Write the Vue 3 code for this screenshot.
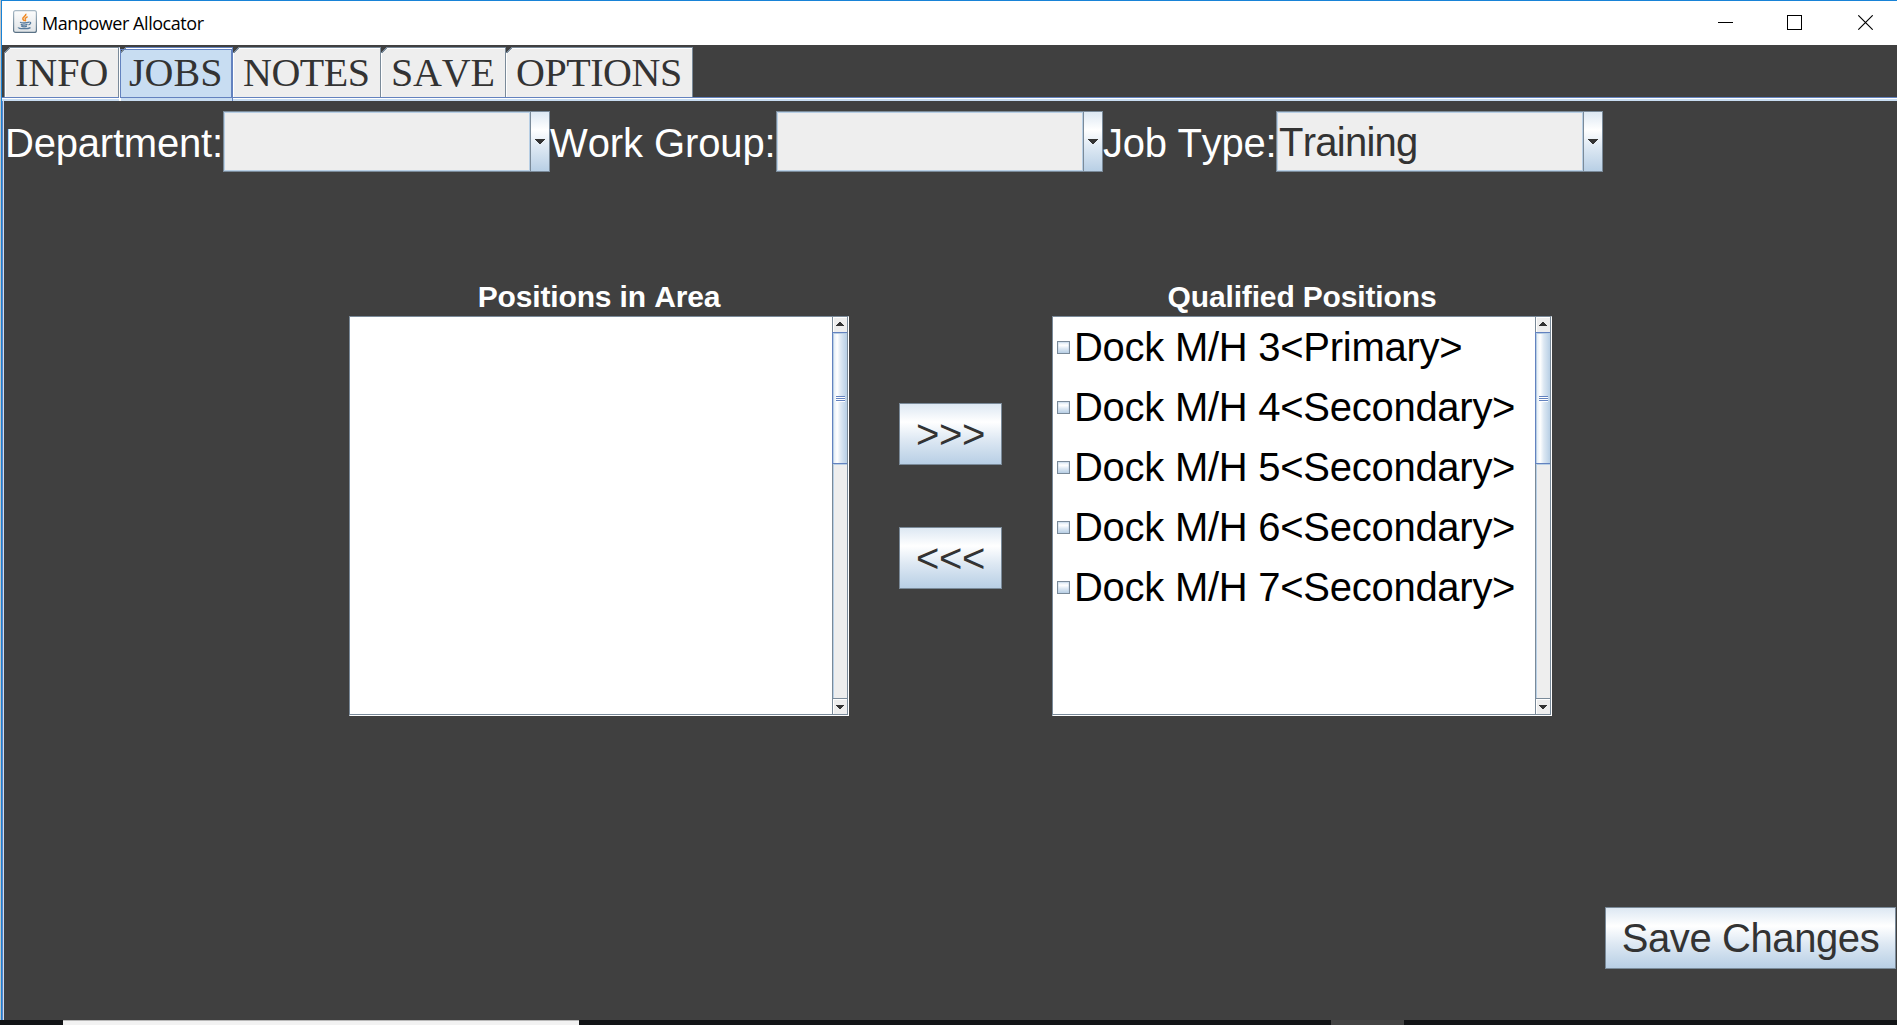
<script setup>
import { ref } from 'vue'

const tabs = [
  { name: 'INFO', w: 115 },
  { name: 'JOBS', w: 114 },
  { name: 'NOTES', w: 148 },
  { name: 'SAVE', w: 125 },
  { name: 'OPTIONS', w: 187 },
]
const active = ref('JOBS')

const filters = [
  { label: 'Department:', value: '', cls: 'department' },
  { label: 'Work Group:', value: '', cls: 'group' },
  { label: 'Job Type:', value: 'Training', cls: 'type' },
]

const lists = [
  { title: 'Positions in Area', cls: 'area', items: [] },
  {
    title: 'Qualified Positions',
    cls: 'qualified',
    items: [
      'Dock M/H 3<Primary>',
      'Dock M/H 4<Secondary>',
      'Dock M/H 5<Secondary>',
      'Dock M/H 6<Secondary>',
      'Dock M/H 7<Secondary>',
    ],
  },
]
</script>

<template>
  <div class="screen">
    <div class="window">
      <header class="titlebar">
        <svg class="java" width="24" height="23" viewBox="0 0 24 23">
          <defs>
            <linearGradient id="plate" x1="0" y1="0" x2="0" y2="1">
              <stop offset="0" stop-color="#fdfdfd" />
              <stop offset="1" stop-color="#dfe3e6" />
            </linearGradient>
            <linearGradient id="rim" x1="0" y1="0" x2="0" y2="1">
              <stop offset="0" stop-color="#a9bac6" />
              <stop offset="1" stop-color="#5a7286" />
            </linearGradient>
          </defs>
          <rect x=".6" y=".6" width="22.8" height="21.8" rx="2" fill="url(#plate)" stroke="url(#rim)" stroke-width="1.2" />
          <path d="M12.8 3.8c1 2.2-3.8 3.4-3 5.3.3.9 1.4 1.5 1.8 2.1M14.6 6.6c-1.6.8-2.8 1.6-2.3 2.7.4.8.5 1.1-.2 1.9" fill="none" stroke="#f08a24" stroke-width="1.5" />
          <path d="M7 12.3c1.6 1 6.6.9 9-.1M16.3 12.2c2.2-.3 1.7 2-.8 2.7M7.8 14.3c1.6.8 5 .8 6.700.1M8.300 16.100c1.500.8 4 .8 5.600.1M5.500 17.300c-1 1.600 9.300 2 12 .3" fill="none" stroke="#557a9c" stroke-width="1.300" />
        </svg>
        <span class="caption">Manpower Allocator</span>
        <svg class="controls" width="155" height="15" viewBox="0 0 155 15" fill="none" stroke="#000">
          <path d="M0 7.500h15" />
          <rect x="69.500" y=".5" width="14" height="14" />
          <path d="M140.300 .3l14.400 14.400M154.700 .3l-14.400 14.400" stroke-width="1.100" />
        </svg>
      </header>

      <nav class="tabs">
        <button
          v-for="t in tabs"
          :key="t.name"
          class="tab"
          :class="[{ active: t.name === active }, t.name.toLowerCase()]"
          :style="{ width: t.w + 'px' }"
          @click="active = t.name"
        >{{ t.name }}</button>
      </nav>

      <main class="pane">
        <section class="filters">
          <template v-for="f in filters" :key="f.label">
            <label class="flabel" :class="f.cls">{{ f.label }}</label>
            <div class="combo">
              <div class="field"><span>{{ f.value }}</span></div>
              <div class="drop">
                <svg width="10" height="5" viewBox="0 0 10 5" shape-rendering="crispEdges"><path d="M0 0h10v1H9v1H8v1H7v1H6v1H4V4H3V3H2V2H1V1H0z" fill="#333" /></svg>
              </div>
            </div>
          </template>
        </section>

        <section class="lists">
          <div v-for="l in lists" :key="l.title" class="column" :class="l.cls">
            <h2><span>{{ l.title }}</span></h2>
            <div class="scroll">
              <ul>
                <li v-for="i in l.items" :key="i">
                  <i class="check"></i><span>{{ i }}</span>
                </li>
              </ul>
              <div class="bar">
                <div class="step">
                  <svg width="8" height="4" viewBox="0 0 8 4" shape-rendering="crispEdges"><path d="M3 0h2v1h1v1h1v1h1v1H0V3h1V2h1V1h1z" fill="#333" /></svg>
                </div>
                <div class="thumb"><i></i><i></i><i></i></div>
                <div class="track"></div>
                <div class="step down">
                  <svg width="8" height="4" viewBox="0 0 8 4" shape-rendering="crispEdges"><path d="M0 0h8v1H7v1H6v1H5v1H3V3H2V2H1V1H0z" fill="#333" /></svg>
                </div>
              </div>
            </div>
          </div>
          <div class="movers">
            <button class="metal">&gt;&gt;&gt;</button>
            <button class="metal">&lt;&lt;&lt;</button>
          </div>
        </section>

        <footer class="actions">
          <button class="metal save">Save Changes</button>
        </footer>
      </main>
    </div>
    <div class="taskbar">
      <div class="search"></div>
      <div class="task"></div>
    </div>
  </div>
</template>

<style>
body {
  margin: 0;
  overflow: hidden;
}
</style>

<style scoped>
.screen {
  width: 1897px;
  height: 1025px;
  display: flex;
  flex-direction: column;
  background: #404040;
  font-family: "Liberation Sans", Arial, sans-serif;
  font-size: 40px;
  font-kerning: none;
  color: #333;
  overflow: hidden;
}
.screen * {
  box-sizing: border-box;
}
button {
  font: inherit;
  font-kerning: none;
  color: inherit;
  padding: 0;
  margin: 0;
  border-radius: 0;
  white-space: nowrap;
}
.window {
  height: 1020px;
  border-top: 1px solid #1883d7;
  border-left: 1px solid #1883d7;
  margin-left: 1px;
  box-shadow: -1px 0 #c4c4c4;
}
.titlebar {
  height: 44px;
  background: #fff;
  display: flex;
  align-items: flex-start;
  padding: 9px 24px 0 11px;
}
.caption {
  margin: 1px 0 0 5px;
  font: 18px/24px "Open Sans", "Noto Sans", sans-serif;
  letter-spacing: -0.45px;
  color: #000;
  white-space: nowrap;
}
.controls {
  margin: 5px 0 0 auto;
}
.tabs {
  height: 56px;
  padding: 2px 0 0 2px;
  display: flex;
  background:
    linear-gradient(#6382bf, #6382bf) 0 52px / 100% 1px no-repeat,
    linear-gradient(#fff, #fff) 0 53px / 100% 1px no-repeat,
    linear-gradient(#c8ddf2, #c8ddf2) 0 54px / 100% 2px no-repeat,
    #404040;
}
.tab {
  position: relative;
  height: 50px;
  border: 0;
  border-top: 1px solid #7a8a99;
  border-right: 1px solid #7a8a99;
  background: #eee;
  box-shadow: inset 1px 1px #fff;
  font-family: "Liberation Serif", "Times New Roman", serif;
  line-height: 46px;
  text-align: left;
  padding-left: 10px;
}
.tab.info {
  border-left: 1px solid #7a8a99;
}
.tab.notes,
.tab.options {
  letter-spacing: -0.45px;
}
.tab.save {
  width: 125px;
  letter-spacing: -0.2px;
}
.tab::before {
  content: "";
  position: absolute;
  left: 0;
  top: -1px;
  width: 6px;
  height: 6px;
  background: linear-gradient(135deg, #404040 0 48%, #7a8a99 48% 60%, transparent 60%);
}
.tab.info::before {
  left: -1px;
}
.tab.active {
  height: 54px;
  background: #c8ddf2;
  border-top: 1px solid #6382bf;
  border-right: 1px solid #6382bf;
  border-left: 1px solid #fff;
  padding: 0 0 4px 9px;
}
.tab.active::after {
  content: "";
  position: absolute;
  left: 0;
  top: 1px;
  right: 0;
  height: 47px;
  border: 1px solid #6382bf;
}
.pane {
  height: 919px;
  border-left: 1px solid #6382bf;
  box-shadow: inset 1px 0 #c8ddf2;
  background: #404040;
  display: flex;
  flex-direction: column;
}
.filters {
  height: 71px;
  padding: 10px 0 0 2px;
  display: flex;
  color: #fff;
}
.flabel {
  line-height: 65px;
  white-space: nowrap;
  flex: none;
}
.department {
  width: 218px;
  letter-spacing: -0.2px;
}
.group {
  width: 226px;
  letter-spacing: -0.1px;
}
.type {
  width: 173px;
  letter-spacing: -0.25px;
}
.combo {
  width: 327px;
  height: 61px;
  flex: none;
  display: flex;
  border: 1px solid #7a8a99;
  background: #eee;
  color: #333;
}
.field {
  flex: 1;
  border: 1px solid #b8cfe5;
  line-height: 59px;
  padding-left: 1px;
  letter-spacing: -0.75px;
}
.drop {
  width: 19px;
  border-left: 1px solid #7a8a99;
  background: linear-gradient(#dde8f3, #fff 30%, #dde8f3 60%, #b8cfe5);
  display: flex;
  justify-content: center;
  padding-top: 27px;
}
.drop svg {
  flex: none;
}
.lists {
  margin-top: 108px;
  height: 436px;
  display: flex;
}
.column {
  width: 500px;
  flex: none;
}
.area {
  margin-left: 346px;
  order: 1;
}
.movers {
  order: 2;
  width: 103px;
  margin: 123px 50px 0;
  display: flex;
  flex-direction: column;
  gap: 62px;
}
.qualified {
  order: 3;
}
h2 {
  height: 36px;
  margin: 0;
  font-size: 30px;
  line-height: 34px;
  letter-spacing: -0.15px;
  text-align: center;
  color: #fff;
}
.scroll {
  height: 400px;
  display: flex;
  background: #fff;
  border: 1px solid #7a8a99;
  border-right-color: #fff;
  border-bottom-color: #fff;
  box-shadow: inset -1px -1px #7a8a99;
  padding: 0 1px 1px 0;
}
ul {
  flex: 1;
  margin: 0;
  padding: 0 0 0 4px;
  list-style: none;
  color: #000;
}
li {
  height: 60px;
  display: flex;
  align-items: center;
  white-space: nowrap;
  letter-spacing: -0.27px;
}
.check {
  width: 13px;
  height: 13px;
  margin: 1px 4px 0 0;
  border: 1px solid #7a8a99;
  background: linear-gradient(#dde8f3, #fff 30%, #dde8f3 60%, #b8cfe5);
  box-shadow: inset 0 0 0 1px rgba(184, 207, 229, 0.4);
}
.bar {
  width: 15px;
  display: flex;
  flex-direction: column;
}
.step {
  height: 15px;
  border-left: 1px solid #7a8a99;
  background: #eee;
  box-shadow: inset 1px 1px #fff;
  display: flex;
  justify-content: center;
  padding-top: 5px;
}
.step.down {
  height: 16px;
  border-top: 1px solid #7a8a99;
  padding-top: 6px;
}
.thumb {
  height: 132px;
  border: 1px solid #6382bf;
  border-right: 0;
  background: linear-gradient(90deg, #dde8f3, #fff 30%, #dde8f3 55%, #b8cfe5);
  box-shadow: inset 1px 1px #b8cfe5;
  display: flex;
  flex-direction: column;
  padding: 63px 2px 0 3px;
}
.thumb i {
  height: 2px;
  background: #fff;
  border-top: 1px solid #6382bf;
}
.track {
  flex: 1;
  border-left: 1px solid #7a8a99;
  background: #eee;
  box-shadow: inset 1px 1px #b8cfe5;
}
.metal {
  height: 62px;
  border: 1px solid #7a8a99;
  background: linear-gradient(#dde8f3, #fff 30%, #dde8f3 60%, #b8cfe5);
  line-height: 60px;
  text-align: center;
  letter-spacing: -0.4px;
}
.actions {
  display: flex;
  justify-content: flex-end;
  margin: 191px 1px 0 0;
}
.metal.save {
  width: 291px;
}
.taskbar {
  height: 5px;
  background: #111315;
  display: flex;
}
.search {
  width: 516px;
  margin-left: 63px;
  background: #f2f2f2;
  border-top: 1px solid #b8b8b8;
}
.task {
  width: 73px;
  margin-left: 752px;
  background: #444;
}
</style>
